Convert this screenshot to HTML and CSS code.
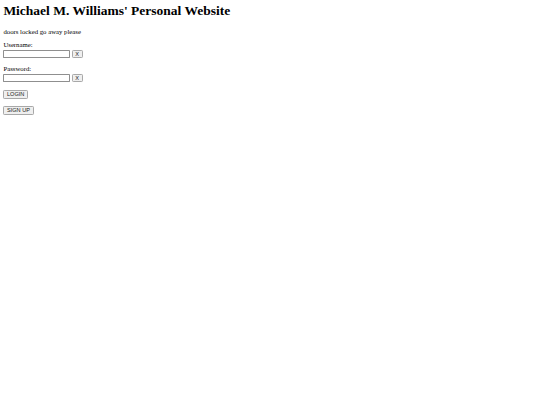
FILE: index.html
```html
<!DOCTYPE html>
<html>
<head>
<meta charset="utf-8">
<title>Michael M. Williams' Personal Website</title>
<link rel="stylesheet" href="styles.css">
</head>
<body class="page">
<div class="scaler">
  <h1 class="title">Michael M. Williams' Personal Website</h1>
  <p class="note">doors locked go away please</p>
  <form class="login">
    <div class="field">
      <label class="label" for="u">Username:</label>
      <div class="row"><input class="input" id="u" type="text"><button class="btn" type="button">X</button></div>
    </div>
    <div class="field">
      <label class="label" for="p">Password:</label>
      <div class="row"><input class="input" id="p" type="password"><button class="btn" type="button">X</button></div>
    </div>
    <div class="field"><div class="row"><button class="btn" type="button">LOGIN</button></div></div>
    <div class="field"><div class="row"><button class="btn" type="button">SIGN UP</button></div></div>
  </form>
</div>
</body>
</html>
```
FILE: styles.css
```css
.page {
  margin: 0;
  background: #fff;
}
.scaler {
  zoom: 0.421875;
  padding: 8px;
  font-family: "Liberation Serif", serif;
  font-size: 16px;
  color: #000;
}
.title {
  font-size: 32px;
  font-weight: bold;
  margin: 0 0 19.5px;
}
.note {
  margin: 16px 0;
}
.login {
  margin: 0;
}
.field {
  margin: 16px 0;
}
.label {
  display: block;
  line-height: 19px;
  font-family: "Liberation Serif", serif;
}
.row {
  display: flex;
  align-items: center;
  gap: 3px;
  height: 22px;
}
.input {
  box-sizing: border-box;
  width: 159px;
  height: 21px;
  padding: 1px 2px;
  border: 1px solid #8f8f8f;
  border-radius: 2px;
  background: #fff;
  font: 13.33px "Liberation Sans", sans-serif;
}
.btn {
  box-sizing: border-box;
  height: 21px;
  padding: 1px 6px;
  border: 1px solid #a8a8a8;
  border-radius: 3px;
  background: #efefef;
  color: #222;
  font: 13.33px "Liberation Sans", sans-serif;
}
```
